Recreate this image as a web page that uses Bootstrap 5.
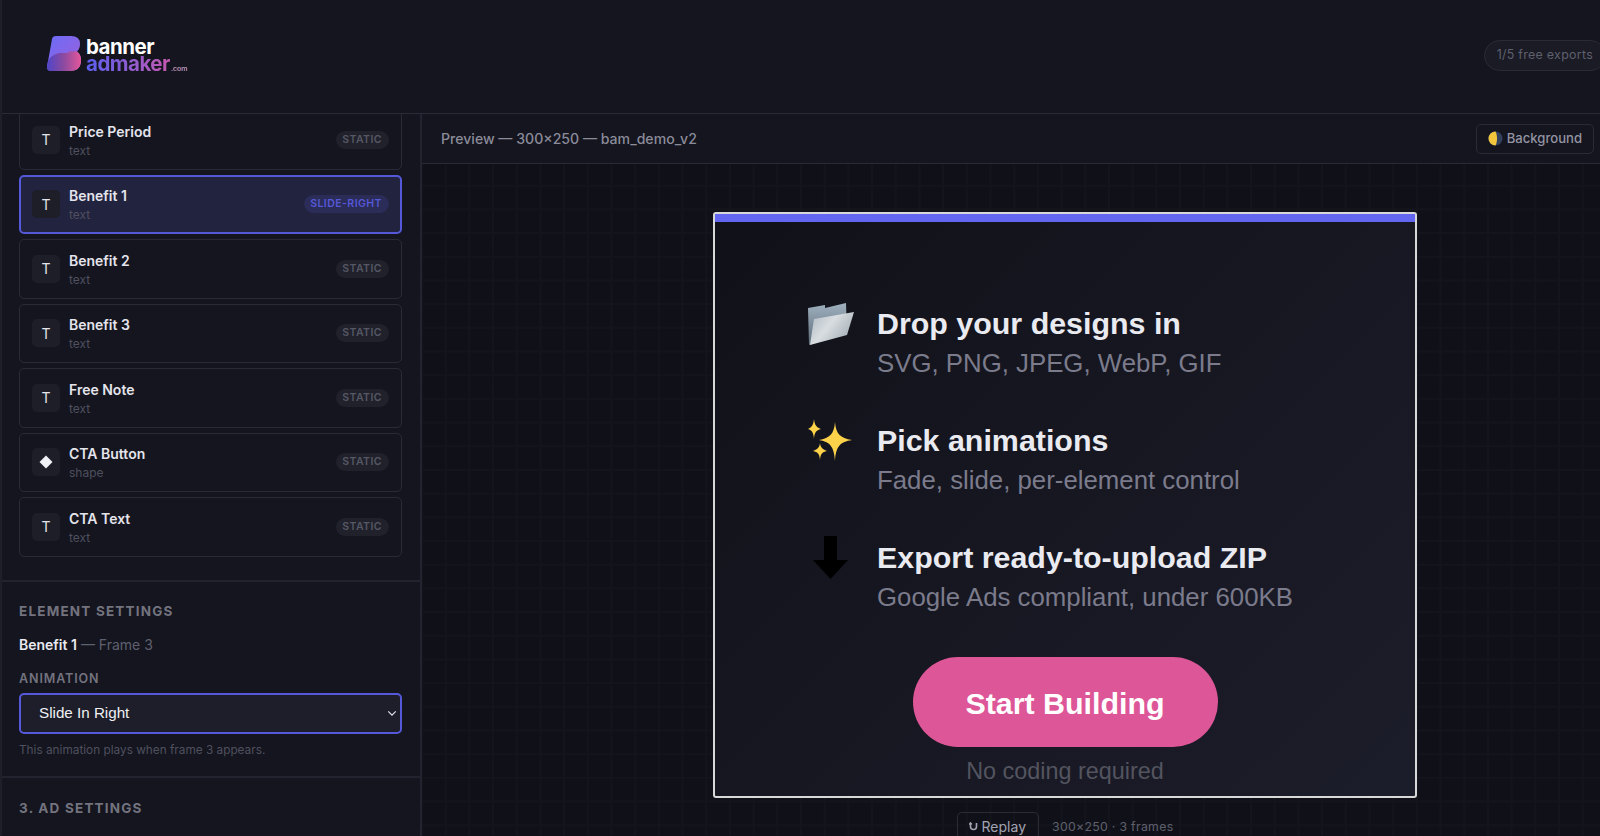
<!DOCTYPE html>
<html lang="en">
<head>
  <meta charset="UTF-8" />
  <meta name="viewport" content="width=device-width, initial-scale=1.0" />
  <title>Banner Ad Maker</title>
  <link href="https://cdn.jsdelivr.net/npm/bootstrap@5.3.3/dist/css/bootstrap.min.css" rel="stylesheet" />
  <style>
    html, body { height: 100%; }
    body { background: #14151e; color: #e4e4ec; font-family: Inter, "Liberation Sans", sans-serif; overflow: hidden; border-left: 2px solid #1e1f29; }

    .app-header { height: 114px; border-bottom: 1px solid #2a2b37; background: #14151e; padding: 0 0 3px 45px; margin-right: -6px; }
    .logo-mark { margin-bottom: 3px; }
    .logo-words { font-weight: 700; letter-spacing: -.5px; margin-top: 6px; }
    .logo-top { font-size: 20.5px; color: #fff; line-height: 16.5px; }
    .logo-bottom { font-size: 20.5px; line-height: 16.5px; background: linear-gradient(90deg, #5a5ff0 0%, #a55bc4 60%, #e0559a 100%); -webkit-background-clip: text; background-clip: text; color: transparent; }
    .logo-tld { font-size: 7px; font-weight: 500; color: #8b8b9a; letter-spacing: 0; margin-left: 1px; }
    .exports-pill { border: 1px solid #2a2b37; background: #1a1b25; color: #5f606e; font-size: 12.4px; height: 31px; padding: 0 12px; letter-spacing: .3px; }

    .app-body { height: 722px; }
    .side-panel { width: 420px; border-right: 2px solid #22232e; overflow: hidden; }
    .layer-stack { padding: 0 18px 23px 17px; margin-top: -4px; gap: 5px; border-bottom: 2px solid #22232e; }
    .layer-item { height: 59.5px; border: 1px solid #2a2b37; border-radius: 5px; padding: 0 12px; background: #14151e; }
    .layer-item.is-active { border: 2px solid #5558d8; background: #22233f; padding: 0 11px; }
    .layer-tile { width: 28px; height: 28px; background: #1d1e28; border-radius: 5px; color: #e4e4ec; font-size: 14px; margin-right: 9px; }
    .layer-name { font-size: 14px; font-weight: 600; line-height: 18px; margin-top: 3px; color: #e4e4ec; }
    .layer-type { font-size: 12px; line-height: 18px; margin-top: 1px; color: #4f505e; }
    .layer-badge { background: #20212b; color: #565765; font-size: 10.5px; font-weight: 600; letter-spacing: .45px; height: 18px; line-height: 18px; padding: 0 7px 0 6px; }
    .is-active .layer-badge { background: #2b2c57; color: #5558d8; }

    .settings-block { padding: 21px 18px 0 17px; height: 196px; border-bottom: 2px solid #22232e; }
    .section-title { font-size: 13.5px; font-weight: 700; letter-spacing: 1.2px; color: #73737f; line-height: 16px; }
    .selected-line { font-size: 14px; line-height: 18px; margin-top: 17px; color: #5f606e; }
    .selected-line b { color: #e9e9f0; font-weight: 600; }
    .field-label { font-size: 12.5px; font-weight: 600; letter-spacing: .9px; color: #73737f; line-height: 16px; margin-top: 17px; margin-bottom: 6px; }
    .anim-select.form-select { height: 41px; border: 2px solid #5558d8; border-radius: 5px; background-color: #1d1e29; color: #f0f0f5; font-family: "Liberation Sans", sans-serif; font-size: 15.2px; padding: 0 20px 0 18px; box-shadow: none;
      background-image: url("data:image/svg+xml,%3Csvg xmlns='http://www.w3.org/2000/svg' viewBox='0 0 12 8'%3E%3Cpath d='M1.5 1.5 6 6l4.5-4.5' fill='none' stroke='%23e4e4ec' stroke-width='1.4'/%3E%3C/svg%3E"); background-size: 10px 7px; background-position: right 3px center; }
    .field-hint { font-size: 11.8px; line-height: 16px; color: #4f505e; margin-top: 8px; }
    .ad-settings { padding: 22px 17px 0; }

    .preview-bar { height: 50px; border-bottom: 1px solid #2a2b37; padding: 0 6px 0 19px; color: #8b8b9a; font-size: 14.1px; font-weight: 500; }
    .bg-toggle.btn { border: 1px solid #2a2b37; border-radius: 5px; color: #9393a3; font-size: 13.1px; font-weight: 500; padding: 0 11px 0 11px; height: 30px; gap: 4px; background: transparent; }
    .preview-canvas { background-color: #101118; background-image: linear-gradient(#14151c 1.5px, transparent 1.5px), linear-gradient(90deg, #14151c 1.5px, transparent 1.5px); background-size: 23.7px 23.7px; background-position: -1px -3px; padding: 48px 0 0 108px; }

    .ad-frame { width: 704px; height: 586px; border: 2px solid #d8d8d8; border-radius: 3px; background: linear-gradient(135deg, #101118 0%, #1c1d2a 100%); font-family: "Liberation Sans", sans-serif; }
    .ad-stripe { height: 8px; background: #6366f1; }
    .ad-rows { padding: 83px 0 0 93px; gap: 41px; }
    .ad-row { height: 76px; }
    .ad-emoji { width: 69px; flex: none; margin-top: -3px; }
    .ad-title { font-size: 30.4px; font-weight: 700; color: #eaeaf1; line-height: 36px; }
    .ad-sub { font-size: 25.8px; color: #7b7b8c; line-height: 30px; margin-top: 6.5px; }
    .ad-cta { width: 305px; height: 90px; padding-top: 3px; background: #dd5697; color: #fff; font-size: 30.4px; font-weight: 700; margin-top: 42px; }
    .ad-note { font-size: 23.4px; color: #53545f; line-height: 30px; margin-top: 9px; }

    .replay-row { margin-top: 14px; gap: 13px; }
    .replay-btn.btn { border: 1px solid #2a2b37; border-radius: 5px; color: #a3a3b2; font-size: 14px; height: 30px; padding: 0 12px 2px 11px; background: transparent; }
    .replay-meta { font-size: 12.3px; color: #5f606e; letter-spacing: .3px; }
  </style>
</head>
<body>

  <header class="app-header d-flex align-items-center justify-content-between">
    <div class="d-flex align-items-center gap-1">
      <svg class="logo-mark" width="35" height="35" viewBox="0 0 35 35">
        <defs>
          <linearGradient id="bTop" x1="0" y1="0" x2="1" y2="1"><stop offset="0" stop-color="#6a6cf8" /><stop offset="1" stop-color="#a05fd8" /></linearGradient>
          <linearGradient id="bLow" x1="0" y1="0" x2="1" y2="0"><stop offset="0" stop-color="#4f46c8" /><stop offset=".5" stop-color="#8d4a9f" /><stop offset="1" stop-color="#e4579a" /></linearGradient>
        </defs>
        <path d="M5 3Q5.500 0 9 0H24Q33 0 33 8 33 13 30 15.500 34 18 34 24 34 35 23 35H4Q0 35 0 31Z" fill="url(#bTop)" />
        <path d="M0 31Q0 20 12 17H22L21 15.500H30Q34 18 34 24 34 35 23 35H4Q0 35 0 31Z" fill="url(#bLow)" />
      </svg>
      <div class="logo-words">
        <div class="logo-top">banner</div>
        <div class="logo-bottom">admaker<span class="logo-tld">.com</span></div>
      </div>
    </div>
    <div class="exports-pill rounded-pill d-flex align-items-center">1/5 free exports</div>
  </header>

  <div class="app-body d-flex">
    <aside class="side-panel flex-shrink-0">
      <div class="layer-stack d-flex flex-column" id="layerStack"></div>

      <section class="settings-block">
        <div class="section-title">ELEMENT SETTINGS</div>
        <div class="selected-line"><b>Benefit 1</b> — Frame 3</div>
        <div class="field-label">ANIMATION</div>
        <select class="form-select anim-select">
          <option>Slide In Right</option>
        </select>
        <div class="field-hint">This animation plays when frame 3 appears.</div>
      </section>

      <section class="ad-settings">
        <div class="section-title">3. AD SETTINGS</div>
      </section>
    </aside>

    <main class="flex-grow-1 d-flex flex-column">
      <div class="preview-bar flex-shrink-0 d-flex align-items-center justify-content-between">
        <span>Preview — 300×250 — bam_demo_v2</span>
        <button class="btn bg-toggle d-flex align-items-center" type="button">
          <svg width="15" height="15" viewBox="0 0 15 15">
            <circle cx="7.500" cy="7.500" r="7" fill="#33415f" />
            <path d="M7.500.5a7 7 0 0 0 0 14C9.500 11 9.500 4 7.500.5Z" fill="#f2c53d" />
          </svg>
          Background
        </button>
      </div>

      <div class="preview-canvas flex-grow-1 d-flex flex-column align-items-center">
        <div class="ad-frame d-flex flex-column flex-shrink-0">
          <div class="ad-stripe"></div>
          <div class="ad-rows d-flex flex-column">
            <div class="ad-row d-flex">
              <div class="ad-emoji">
                <svg width="46" height="44" viewBox="0 0 46 44">
                  <defs>
                    <linearGradient id="fBack" x1="0" y1="0" x2="0" y2="1"><stop offset="0" stop-color="#9fb0bf" /><stop offset="1" stop-color="#5c6b78" /></linearGradient>
                    <linearGradient id="fFront" x1="0" y1="0" x2="1" y2=".6"><stop offset="0" stop-color="#aeb9c1" /><stop offset=".5" stop-color="#d8dde0" /><stop offset="1" stop-color="#a5b0b8" /></linearGradient>
                  </defs>
                  <path d="M0 6 17 3V6L38 1 39 31 1 43Z" fill="url(#fBack)" />
                  <path d="M6 17 46 10 39 33 2 43Z" fill="url(#fFront)" />
                </svg>
              </div>
              <div>
                <div class="ad-title">Drop your designs in</div>
                <div class="ad-sub">SVG, PNG, JPEG, WebP, GIF</div>
              </div>
            </div>
            <div class="ad-row d-flex">
              <div class="ad-emoji">
                <svg width="46" height="44" viewBox="0 0 46 44">
                  <g fill="#fbd24a">
                    <path d="M27 3C28 15 32 19 44 21 32 23 28 27 27 42 26 27 22 23 11 21 22 19 26 15 27 3Z" />
                    <path d="M6 0C6.600 6 8 8 13 10 8 11.500 6.600 13 6 20 5.400 13 4 11.500 0 10 4 8 5.400 6 6 0Z" />
                    <path d="M12 24C12.500 28 14 30 19 32 14 33 12.500 35 12 41 11.500 35 10 33 5 32 10 30 11.500 28 12 24Z" />
                  </g>
                </svg>
              </div>
              <div>
                <div class="ad-title">Pick animations</div>
                <div class="ad-sub">Fade, slide, per-element control</div>
              </div>
            </div>
            <div class="ad-row d-flex">
              <div class="ad-emoji">
                <svg width="46" height="44" viewBox="0 0 46 44">
                  <path d="M16 0H29V24H40L22.500 43 5 24H16Z" fill="#000" />
                </svg>
              </div>
              <div>
                <div class="ad-title">Export ready-to-upload ZIP</div>
                <div class="ad-sub">Google Ads compliant, under 600KB</div>
              </div>
            </div>
          </div>
          <div class="d-flex flex-column align-items-center">
            <div class="ad-cta rounded-pill d-flex align-items-center justify-content-center">Start Building</div>
            <div class="ad-note">No coding required</div>
          </div>
        </div>

        <div class="replay-row d-flex align-items-center">
          <button class="btn replay-btn d-flex align-items-center gap-1" type="button">
            <svg width="9" height="10" viewBox="0 0 9 10"><path d="M1.500 3v2.500a3 3 0 0 0 6 0V2M.2 3.600 1.500 2l1.300 1.600" fill="none" stroke="#a3a3b2" stroke-width="1.600" /></svg>
            Replay
          </button>
          <span class="replay-meta">300×250 · 3 frames</span>
        </div>
      </div>
    </main>
  </div>

  <script>
    const layers = [
      { name: "Price Period", type: "text", anim: "STATIC" },
      { name: "Benefit 1", type: "text", anim: "SLIDE-RIGHT", active: true },
      { name: "Benefit 2", type: "text", anim: "STATIC" },
      { name: "Benefit 3", type: "text", anim: "STATIC" },
      { name: "Free Note", type: "text", anim: "STATIC" },
      { name: "CTA Button", type: "shape", anim: "STATIC" },
      { name: "CTA Text", type: "text", anim: "STATIC" },
    ];

    const stack = document.getElementById("layerStack");
    layers.forEach(layer => {
      const row = document.createElement("div");
      row.className = "layer-item d-flex align-items-center" + (layer.active ? " is-active" : "");
      const icon = layer.type === "shape"
        ? `<svg width="14" height="14" viewBox="0 0 14 14"><path d="M7 .5 13.500 7 7 13.500 .5 7Z" fill="#f0f0f5"/></svg>`
        : "T";
      row.innerHTML = `
        <div class="layer-tile d-flex align-items-center justify-content-center">${icon}</div>
        <div class="flex-grow-1">
          <div class="layer-name">${layer.name}</div>
          <div class="layer-type">${layer.type}</div>
        </div>
        <span class="layer-badge rounded-pill">${layer.anim}</span>
      `;
      stack.appendChild(row);
    });
  </script>
  <script src="https://cdn.jsdelivr.net/npm/bootstrap@5.3.3/dist/js/bootstrap.bundle.min.js"></script>
</body>
</html>
